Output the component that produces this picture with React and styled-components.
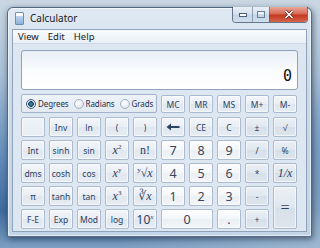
import React from 'react';
import styled, {createGlobalStyle, css} from 'styled-components';

const GlobalStyle = createGlobalStyle`
    html, body {
        margin: 0;
        padding: 0;
    }
    body {
        width: 320px;
        height: 248px;
        overflow: hidden;
        font-family: "Noto Sans", "Open Sans", sans-serif;
    }
`;

const Desktop = styled.div`
    width: 320px;
    height: 248px;
    box-sizing: border-box;
    padding: 7px 0 0 7px;
    background:
        radial-gradient(ellipse at 100% 100%, rgba(160, 185, 210, 0.9) 0%, rgba(160, 185, 210, 0) 45%),
        linear-gradient(180deg, #cad7e3 0%, #a9c0d6 30%, #6992bd 60%, #3f6c9d 85%, #7d9fc2 100%);
`;

const Window = styled.div`
    width: 305px;
    height: 230px;
    box-sizing: border-box;
    display: flex;
    flex-direction: column;
    padding: 0 4px 4px;
    border: 1px solid rgba(45, 65, 95, 0.75);
    border-radius: 6px 6px 2px 2px;
    background: linear-gradient(180deg, #dfe9f3 0%, #cbdbeb 35%, #c2d4e7 100%);
    box-shadow: 1px 2px 6px rgba(10, 25, 50, 0.55), inset 0 0 0 1px rgba(255, 255, 255, 0.55);
`;

const TitleBar = styled.div`
    height: 21px;
    display: flex;
    align-items: flex-start;
    flex-shrink: 0;
`;

const AppIcon = styled.div`
    width: 7px;
    height: 11px;
    margin: 4px 0 0 3px;
    border: 1px solid #6e8fb3;
    border-radius: 1px;
    background: linear-gradient(180deg, #ffffff 0%, #ffffff 30%, #bcd4ee 31%, #8fb3dc 100%);
`;

const Title = styled.span`
    margin: 3px 0 0 6px;
    font-size: 10px;
    line-height: 14px;
    color: #1a1a1a;
`;

const CaptionGroup = styled.div`
    margin: -1px -1px 0 auto;
    height: 15px;
    display: flex;
    border: 1px solid rgba(50, 70, 100, 0.7);
    border-top: none;
    border-radius: 0 0 4px 4px;
    overflow: hidden;
`;

const CaptionButton = styled.div`
    width: ${p => p.w}px;
    height: 100%;
    display: flex;
    align-items: center;
    justify-content: center;
    border-left: ${p => (p.first ? 'none' : '1px solid rgba(60, 80, 110, 0.45)')};
    background: ${p =>
        p.close
            ? 'linear-gradient(180deg, #e8a89a 0%, #d86a55 45%, #c3391f 55%, #d5664c 100%)'
            : 'linear-gradient(180deg, #e8eff6 0%, #d6e1ed 45%, #c4d5e6 55%, #d0deec 100%)'};
`;

const Client = styled.div`
    flex: 1;
    display: flex;
    flex-direction: column;
    border: 1px solid #8fa2b8;
    background: #dde7f2;
`;

const MenuBar = styled.div`
    height: 13px;
    display: flex;
    align-items: center;
    gap: 9px;
    padding: 0 0 0 5px;
    border-bottom: 1px solid #cfd9e5;
    background: linear-gradient(180deg, #f8fafd 0%, #eaf0f6 100%);
`;

const MenuItem = styled.span`
    font-size: 9.5px;
    color: #1a1a1a;
`;

const Content = styled.div`
    display: flex;
    flex-direction: column;
    padding: 6px 8px 0;
`;

const Display = styled.div`
    height: 34px;
    display: flex;
    align-items: flex-end;
    justify-content: flex-end;
    padding: 0 5px 4px;
    border: 1px solid #8ea3bb;
    border-radius: 3px;
    background: linear-gradient(180deg, #e9f0f7 0%, #fbfcfe 55%, #ffffff 100%);
    font-family: "DejaVu Sans Mono", monospace;
    font-size: 15px;
    line-height: 17px;
    color: #111;
`;

const Columns = css`
    display: grid;
    grid-template-columns: repeat(10, 24px);
    column-gap: 4px;
`;

const TopRow = styled.div`
    ${Columns};
    height: 19px;
    margin: 4px 0 4px;
`;

const RadioGroup = styled.div`
    grid-column: span 5;
    display: flex;
    align-items: center;
    gap: 5px;
    padding: 0 0 0 4px;
    border: 1px solid #a3b4c8;
    border-radius: 2px;
    background: linear-gradient(180deg, #eef3f8 0%, #e2e9f1 100%);
    overflow: hidden;
`;

const RadioOption = styled.label`
    display: flex;
    align-items: center;
    gap: 2px;
    font-size: 8px;
    letter-spacing: -0.1px;
    color: #1e3048;
    white-space: nowrap;
`;

const RadioDot = styled.span`
    width: 8px;
    height: 8px;
    flex-shrink: 0;
    border-radius: 50%;
    border: 1px solid ${p => (p.on ? '#44607f' : '#a4b2c2')};
    background: ${p =>
        p.on
            ? 'radial-gradient(circle at 50% 50%, #3f8fb0 0%, #1c4a66 45%, #dce6ef 55%, #f4f7fa 100%)'
            : 'radial-gradient(circle at 40% 35%, #ffffff 0%, #e6ecf2 60%, #cfd8e2 100%)'};
`;

const Keypad = styled.div`
    ${Columns};
    grid-template-rows: repeat(5, 20px);
    row-gap: 3px;
`;

const keyLooks = {
    fn: 'linear-gradient(180deg, #f3f6fa 0%, #e9eef4 48%, #e0e7ef 52%, #e7edf3 100%)',
    digit: 'linear-gradient(180deg, #fbfcfe 0%, #f4f7fa 48%, #ebf0f5 52%, #f2f5f8 100%)',
    op: 'linear-gradient(180deg, #ebf0f5 0%, #e0e7ef 48%, #d7e0e9 52%, #dee5ed 100%)',
    blank: 'linear-gradient(180deg, #eef3f8 0%, #e7edf3 100%)',
};

const Key = styled.div`
    display: flex;
    align-items: center;
    justify-content: center;
    box-sizing: border-box;
    border: 1px solid #abbacc;
    border-radius: 2px;
    box-shadow: inset 0 0 0 1px rgba(255, 255, 255, 0.6);
    background: ${p => keyLooks[p.look || 'fn']};
    color: ${p => (p.look === 'digit' ? '#3b4656' : '#2c4264')};
    font-size: ${p => (p.look === 'digit' ? '12.5px' : '8.5px')};
    grid-column: ${p => (p.wide ? 'span 2' : 'auto')};
    grid-row: ${p => (p.tall ? 'span 2' : 'auto')};
    ${p => p.mem && css`
        height: 18px;
        align-self: end;
    `}
`;

const Math = styled.span`
    font-family: "Liberation Serif", "DejaVu Serif", serif;
    font-style: italic;
    font-size: 12px;
    color: #2c4264;
    sup {
        font-size: 7px;
        font-style: normal;
        vertical-align: 5px;
        line-height: 0;
    }
`;

const Plain = styled.span`
    font-family: ${p => (p.sans ? '"Noto Sans", sans-serif' : '"Liberation Serif", "DejaVu Serif", serif')};
    font-size: ${p => p.size || 12}px;
    sup {
        font-family: "Liberation Serif", serif;
        font-size: 7px;
        font-style: italic;
        vertical-align: 5px;
        line-height: 0;
    }
`;

function Back() {
    return (
        <svg width="14" height="8" viewBox="0 0 14 8">
            <path d="M0.5 4 L5 0.5 L5 3 L13.5 3 L13.5 5 L5 5 L5 7.5 Z" fill="#2c4264"/>
        </svg>
    );
}

function Radio({on, children}) {
    return (
        <RadioOption>
            <RadioDot on={on}/>
            {children}
        </RadioOption>
    );
}

function App() {
    return (
        <Desktop>
            <GlobalStyle/>
            <Window>
                <TitleBar>
                    <AppIcon/>
                    <Title>Calculator</Title>
                    <CaptionGroup>
                        <CaptionButton w={19} first>
                            <svg width="8" height="4" viewBox="0 0 8 4">
                                <rect x="0.5" y="0.5" width="7" height="3" fill="#fff" stroke="#4d5f76"/>
                            </svg>
                        </CaptionButton>
                        <CaptionButton w={16}>
                            <svg width="8" height="7" viewBox="0 0 8 7">
                                <rect x="0.5" y="0.5" width="7" height="6" fill="none" stroke="#6d7f96"/>
                                <rect x="1.5" y="1.5" width="5" height="1.5" fill="#fff"/>
                            </svg>
                        </CaptionButton>
                        <CaptionButton w={37} close>
                            <svg width="10" height="9" viewBox="0 0 10 9">
                                <path d="M1.5 1 L8.5 8 M8.5 1 L1.5 8" stroke="#5a2018" strokeWidth="3"/>
                                <path d="M1.5 1 L8.5 8 M8.5 1 L1.5 8" stroke="#fff" strokeWidth="1.6"/>
                            </svg>
                        </CaptionButton>
                    </CaptionGroup>
                </TitleBar>
                <Client>
                    <MenuBar>
                        <MenuItem>View</MenuItem>
                        <MenuItem>Edit</MenuItem>
                        <MenuItem>Help</MenuItem>
                    </MenuBar>
                    <Content>
                        <Display>0</Display>
                        <TopRow>
                            <RadioGroup>
                                <Radio on>Degrees</Radio>
                                <Radio>Radians</Radio>
                                <Radio>Grads</Radio>
                            </RadioGroup>
                            <Key mem>MC</Key>
                            <Key mem>MR</Key>
                            <Key mem>MS</Key>
                            <Key mem>M+</Key>
                            <Key mem>M-</Key>
                        </TopRow>
                        <Keypad>
                            <Key look="blank"/>
                            <Key>Inv</Key>
                            <Key>ln</Key>
                            <Key>(</Key>
                            <Key>)</Key>
                            <Key><Back/></Key>
                            <Key>CE</Key>
                            <Key>C</Key>
                            <Key look="op">±</Key>
                            <Key look="op">√</Key>

                            <Key>Int</Key>
                            <Key>sinh</Key>
                            <Key>sin</Key>
                            <Key><Math>x<sup>2</sup></Math></Key>
                            <Key><Plain>n!</Plain></Key>
                            <Key look="digit">7</Key>
                            <Key look="digit">8</Key>
                            <Key look="digit">9</Key>
                            <Key look="op">/</Key>
                            <Key look="op">%</Key>

                            <Key>dms</Key>
                            <Key>cosh</Key>
                            <Key>cos</Key>
                            <Key><Math>x<sup>y</sup></Math></Key>
                            <Key><Math><sup>y</sup>√x</Math></Key>
                            <Key look="digit">4</Key>
                            <Key look="digit">5</Key>
                            <Key look="digit">6</Key>
                            <Key look="op">*</Key>
                            <Key look="op"><Math>1/x</Math></Key>

                            <Key>π</Key>
                            <Key>tanh</Key>
                            <Key>tan</Key>
                            <Key><Math>x<sup>3</sup></Math></Key>
                            <Key><Math>∛x</Math></Key>
                            <Key look="digit">1</Key>
                            <Key look="digit">2</Key>
                            <Key look="digit">3</Key>
                            <Key look="op">-</Key>
                            <Key look="op" tall>
                                <Plain size={16}>=</Plain>
                            </Key>

                            <Key>F-E</Key>
                            <Key>Exp</Key>
                            <Key>Mod</Key>
                            <Key>log</Key>
                            <Key><Plain sans size={12}>10<sup>x</sup></Plain></Key>
                            <Key look="digit" wide>0</Key>
                            <Key look="digit">.</Key>
                            <Key look="op">+</Key>
                        </Keypad>
                    </Content>
                </Client>
            </Window>
        </Desktop>
    );
}

export default App;
